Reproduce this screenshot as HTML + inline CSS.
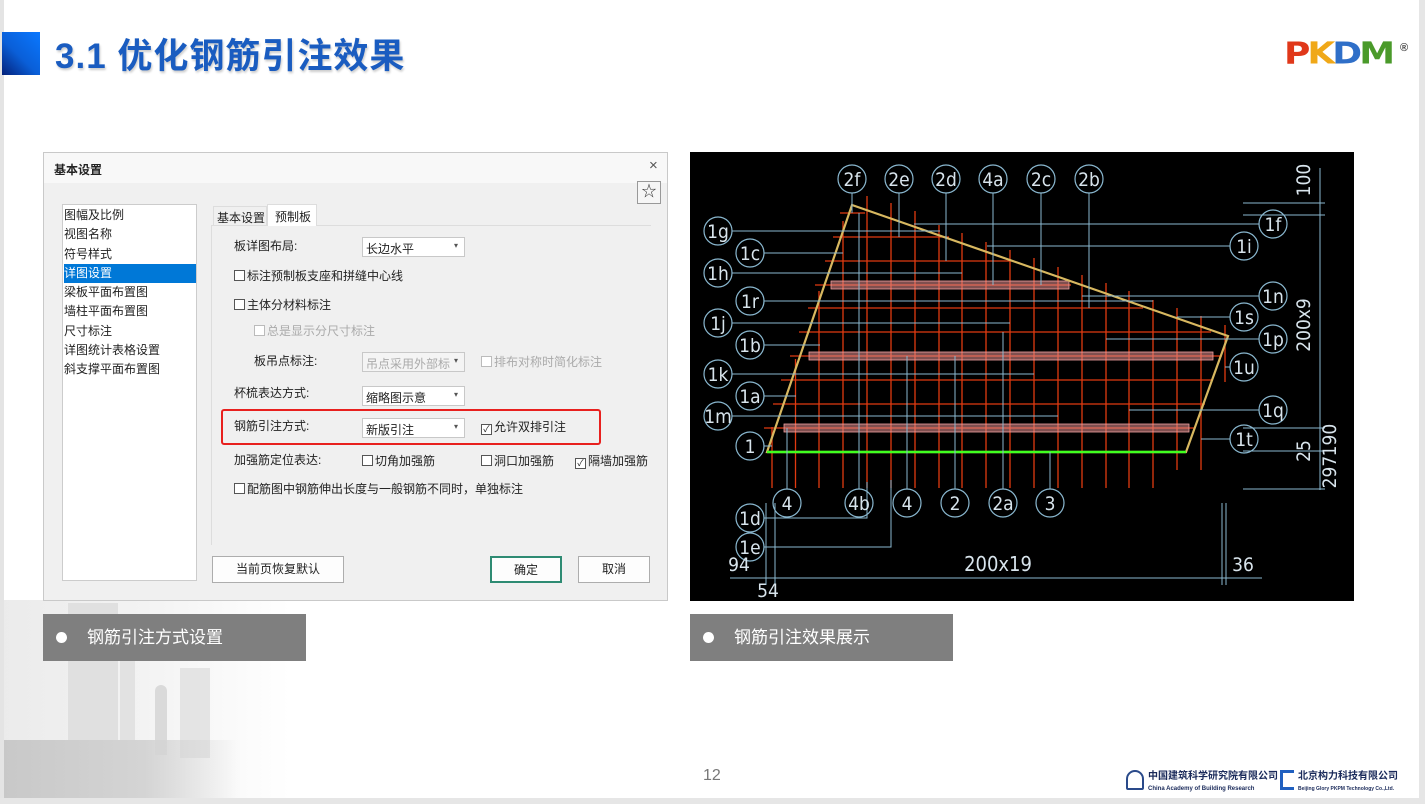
<!DOCTYPE html>
<html><head><meta charset="utf-8"><style>
*{margin:0;padding:0;box-sizing:border-box}
body{width:1425px;height:804px;background:#fff;position:relative;overflow:hidden;font-family:"Liberation Sans","Noto Sans CJK SC",sans-serif}
.abs{position:absolute;white-space:nowrap}
.dlg{left:43px;top:152px;width:625px;height:449px;background:#f0f0f0;border:1px solid #c9c9c9}
.dlg .t{font-size:12px;color:#222}
.cb{display:inline-block;width:11px;height:11px;border:1px solid #555;background:#fff;vertical-align:-1px;margin-right:2px;font-size:9px;line-height:9px;text-align:center}
.sel{background:#fff;border:1px solid #c8c8c8;height:20px;width:103px;font-size:12px;padding:2px 3px;color:#222}
.sel:after{content:"▾";position:absolute;right:6px;top:3px;font-size:8px;color:#555}
.btn{background:#fdfdfd;border:1px solid #adadad;font-size:12px;text-align:center;line-height:24px;color:#222;height:27px}
.cap{height:47px;background:#7f7f7f;color:#fff;font-size:17px;line-height:47px}
.cap i{position:absolute;left:13px;top:18px;width:11px;height:11px;border-radius:50%;background:#fff}
</style></head><body>
<!-- background building -->
<div class="abs" style="left:0;top:600px;width:290px;height:198px;background:linear-gradient(90deg,#e6e6e6 0%,#f0f0f0 50%,#fff 100%);opacity:.8"></div>
<div class="abs" style="left:68px;top:603px;width:50px;height:150px;background:#e0e0e0"></div>
<div class="abs" style="left:120px;top:660px;width:15px;height:95px;background:#e2e2e2"></div>
<div class="abs" style="left:155px;top:685px;width:12px;height:70px;background:#dadada;border-radius:6px 6px 0 0"></div>
<div class="abs" style="left:180px;top:668px;width:30px;height:90px;background:#e4e4e4"></div>
<div class="abs" style="left:0;top:740px;width:240px;height:58px;background:linear-gradient(90deg,#c8c8c8,#d4d4d4 60%,rgba(255,255,255,0))"></div>
<div class="abs" style="left:0;top:0;width:4px;height:804px;background:#e4e4e4"></div>
<div class="abs" style="left:1419px;top:0;width:6px;height:804px;background:#e6e6e6"></div>
<div class="abs" style="left:0;top:798px;width:1425px;height:6px;background:#e6e6e6"></div>

<!-- title -->
<div class="abs" style="left:2px;top:32px;width:38px;height:43px;background:linear-gradient(225deg,#0a78ff 0%,#0a5fd8 55%,#04217a 100%)"></div>
<div class="abs" style="left:55px;top:28px;font-size:35px;font-weight:bold;color:#1a5cc0;letter-spacing:1px;text-shadow:1px 2px 2px rgba(0,0,0,.2)">3.1 优化钢筋引注效果</div>
<!-- logo -->
<div class="abs" style="left:1284px;top:38px;font-size:36px;font-weight:bold;font-family:'DejaVu Sans',sans-serif;letter-spacing:-3px;line-height:38px;transform:scaleY(.85);transform-origin:0 0"><span style="color:#e0381a">P</span><span style="color:#f0a818">K</span><span style="color:#2f6fc8">D</span><span style="color:#4a9a2a">M</span></div>
<div class="abs" style="left:1400px;top:42px;font-size:11px;font-weight:bold;color:#444">®</div>

<!-- dialog -->
<div class="abs dlg">
 <div class="abs" style="left:0;top:0;width:623px;height:30px;background:#f8f8f8"></div>
 <div class="abs t" style="left:10px;top:8px;font-weight:bold">基本设置</div>
 <div class="abs" style="left:605px;top:4px;font-size:15px;color:#555">×</div>
 <div class="abs" style="left:593px;top:28px;width:24px;height:23px;border:1px solid #999;background:#f6f6f6;text-align:center;font-size:15px;line-height:20px;color:#333">☆</div>
 <div class="abs" style="left:18px;top:51px;width:135px;height:377px;background:#fff;border:1px solid #ccc"></div>
 <div class="abs t" style="left:20px;top:53px;line-height:19.3px;width:132px">
  <div>图幅及比例</div><div>视图名称</div><div>符号样式</div><div style="background:#0078d7;color:#fff">详图设置</div><div>梁板平面布置图</div><div>墙柱平面布置图</div><div>尺寸标注</div><div>详图统计表格设置</div><div>斜支撑平面布置图</div></div>
 <div class="abs" style="left:167px;top:72px;width:440px;height:1px;background:#ddd"></div>
 <div class="abs" style="left:167px;top:72px;width:1px;height:320px;background:#ddd"></div>
 <div class="abs t" style="left:169px;top:53px;width:54px;height:20px;border:1px solid #ddd;background:#f0f0f0;padding:2px 3px">基本设置</div>
 <div class="abs t" style="left:223px;top:51px;width:50px;height:22px;background:#fff;border:1px solid #ddd;border-bottom:none;padding:3px 7px">预制板</div>
 <div class="abs t" style="left:190px;top:84px">板详图布局:</div>
 <div class="abs sel" style="left:318px;top:84px">长边水平</div>
 <div class="abs t" style="left:190px;top:114px"><span class="cb"></span>标注预制板支座和拼缝中心线</div>
 <div class="abs t" style="left:190px;top:143px"><span class="cb"></span>主体分材料标注</div>
 <div class="abs t" style="left:210px;top:169px;color:#aaa"><span class="cb" style="border-color:#bbb"></span>总是显示分尺寸标注</div>
 <div class="abs t" style="left:210px;top:199px">板吊点标注:</div>
 <div class="abs sel" style="left:318px;top:199px;color:#aaa;background:#f4f4f4">吊点采用外部标</div>
 <div class="abs t" style="left:437px;top:200px;color:#aaa"><span class="cb" style="border-color:#bbb"></span>排布对称时简化标注</div>
 <div class="abs t" style="left:190px;top:231px">杯梳表达方式:</div>
 <div class="abs sel" style="left:318px;top:233px">缩略图示意</div>
 <div class="abs" style="left:177px;top:256px;width:380px;height:36px;border:2px solid #e8201e;border-radius:3px"></div>
 <div class="abs t" style="left:190px;top:264px">钢筋引注方式:</div>
 <div class="abs sel" style="left:318px;top:265px">新版引注</div>
 <div class="abs t" style="left:437px;top:265px"><span class="cb">✓</span>允许双排引注</div>
 <div class="abs t" style="left:190px;top:298px">加强筋定位表达:</div>
 <div class="abs t" style="left:318px;top:299px"><span class="cb"></span>切角加强筋</div>
 <div class="abs t" style="left:437px;top:299px"><span class="cb"></span>洞口加强筋</div>
 <div class="abs t" style="left:531px;top:299px"><span class="cb">✓</span>隔墙加强筋</div>
 <div class="abs t" style="left:190px;top:327px"><span class="cb"></span>配筋图中钢筋伸出长度与一般钢筋不同时，单独标注</div>
 <div class="abs btn" style="left:168px;top:403px;width:132px">当前页恢复默认</div>
 <div class="abs btn" style="left:446px;top:403px;width:72px;border:2px solid #2e8b73">确定</div>
 <div class="abs btn" style="left:534px;top:403px;width:72px">取消</div>
</div>

<!-- captions -->
<div class="abs cap" style="left:43px;top:614px;width:263px"><i></i><span style="position:absolute;left:44px">钢筋引注方式设置</span></div>
<div class="abs cap" style="left:690px;top:614px;width:263px"><i></i><span style="position:absolute;left:44px">钢筋引注效果展示</span></div>
<div class="abs" style="left:703px;top:767px;font-size:16px;color:#777">12</div>

<!-- footer logos -->
<div class="abs" style="left:1126px;top:770px;width:18px;height:20px;border:2px solid #2a4a8a;border-radius:9px 9px 2px 2px"></div>
<div class="abs" style="left:1148px;top:771px;font-size:10px;font-weight:bold;color:#1a2a5a;line-height:11px">中国建筑科学研究院有限公司<br><span style="font-size:6px">China Academy of Building Research</span></div>
<div class="abs" style="left:1280px;top:770px;width:14px;height:20px;border:3px solid #2060c0;border-right:none"></div>
<div class="abs" style="left:1298px;top:771px;font-size:10px;font-weight:bold;color:#1a2a5a;line-height:11px">北京构力科技有限公司<br><span style="font-size:5px">Beijing Glory PKPM Technology Co.,Ltd.</span></div>

<!-- CAD -->
<svg class="abs" style="left:0;top:0" width="1425" height="804" viewBox="0 0 1425 804">
<rect x="690" y="152" width="664" height="449" fill="#000"/>
<g stroke="#e03a10" stroke-width="1.3">
<line x1="772" y1="427" x2="772" y2="488"/><line x1="795.5" y1="359" x2="795.5" y2="488"/><line x1="819" y1="291" x2="819" y2="488"/><line x1="843" y1="221" x2="843" y2="488"/><line x1="867" y1="196" x2="867" y2="488"/><line x1="891" y1="203" x2="891" y2="488"/><line x1="915" y1="211" x2="915" y2="488"/><line x1="939" y1="225" x2="939" y2="488"/><line x1="962" y1="233" x2="962" y2="488"/><line x1="986" y1="242" x2="986" y2="488"/><line x1="1010" y1="250" x2="1010" y2="488"/><line x1="1034" y1="258" x2="1034" y2="488"/><line x1="1058" y1="267" x2="1058" y2="488"/><line x1="1082" y1="275" x2="1082" y2="488"/><line x1="1106" y1="283" x2="1106" y2="488"/><line x1="1129" y1="291" x2="1129" y2="488"/><line x1="1153" y1="300" x2="1153" y2="488"/><line x1="1177" y1="308" x2="1177" y2="470"/><line x1="1201" y1="316" x2="1201" y2="470"/><line x1="1225" y1="325" x2="1225" y2="382"/>
<line x1="840" y1="213" x2="865" y2="213"/><line x1="833" y1="237" x2="949" y2="237"/><line x1="825" y1="261" x2="1014" y2="261"/><line x1="815" y1="285" x2="1071" y2="285"/><line x1="808" y1="308" x2="1143" y2="308"/><line x1="799" y1="332" x2="1211" y2="332"/><line x1="790" y1="356" x2="1222" y2="356"/><line x1="781" y1="380" x2="1213" y2="380"/><line x1="773" y1="404" x2="1205" y2="404"/><line x1="764" y1="428" x2="1195" y2="428"/>
</g>
<g fill="#e89090" fill-opacity=".55" stroke="#f0a0a0" stroke-width=".8">
<rect x="831" y="281" width="238" height="8"/><rect x="809" y="352" width="404" height="8"/><rect x="784" y="424" width="405" height="8"/>
</g>
<polygon points="767,452 852,205 1228,336 1186,452" fill="none" stroke="#d8b860" stroke-width="2.2"/>
<line x1="767" y1="452" x2="1186" y2="452" stroke="#40ff20" stroke-width="2.5"/>
<g stroke="#8ab8d0" stroke-width="1" fill="none">
<line x1="732" y1="231" x2="940" y2="231"/><line x1="764" y1="253" x2="843" y2="253"/><line x1="732" y1="273" x2="962" y2="273"/><line x1="764" y1="301" x2="1153" y2="301"/><line x1="732" y1="323" x2="1010" y2="323"/><line x1="764" y1="345" x2="820" y2="345"/><line x1="732" y1="374" x2="1034" y2="374"/><line x1="764" y1="396" x2="796" y2="396"/><line x1="732" y1="416" x2="1058" y2="416"/><line x1="764" y1="446" x2="772" y2="446"/>
<line x1="914" y1="224" x2="1259" y2="224"/><line x1="987" y1="246" x2="1230" y2="246"/><line x1="1082" y1="296" x2="1259" y2="296"/><line x1="1177" y1="317" x2="1230" y2="317"/><line x1="1106" y1="339" x2="1259" y2="339"/><line x1="1225" y1="367" x2="1230" y2="367"/><line x1="1129" y1="410" x2="1259" y2="410"/><line x1="1201" y1="439" x2="1230" y2="439"/>
<line x1="852" y1="193" x2="852" y2="213"/><line x1="899" y1="193" x2="899" y2="237"/><line x1="946" y1="193" x2="946" y2="261"/><line x1="993" y1="193" x2="993" y2="285"/><line x1="1041" y1="193" x2="1041" y2="285"/><line x1="1089" y1="193" x2="1089" y2="308"/>
<line x1="787" y1="489" x2="787" y2="428"/><line x1="859" y1="489" x2="859" y2="213"/><line x1="907" y1="489" x2="907" y2="356"/><line x1="955" y1="489" x2="955" y2="356"/><line x1="1003" y1="489" x2="1003" y2="332"/><line x1="1050" y1="489" x2="1050" y2="452"/>
<polyline points="764,518 867,518 867,482"/><polyline points="764,547 891,547 891,480"/>
<line x1="730" y1="578" x2="1262" y2="578"/><line x1="766" y1="503" x2="766" y2="585"/><line x1="775" y1="503" x2="775" y2="585"/><line x1="1222" y1="503" x2="1222" y2="585"/><line x1="1226" y1="503" x2="1226" y2="585"/>
<line x1="1320" y1="168" x2="1320" y2="490"/><line x1="1243" y1="203" x2="1325" y2="203"/><line x1="1243" y1="215" x2="1325" y2="215"/><line x1="1243" y1="428" x2="1325" y2="428"/><line x1="1243" y1="451" x2="1325" y2="451"/><line x1="1243" y1="489" x2="1325" y2="489"/>
</g>
<g stroke="#8ab8d0" stroke-width="1.2" fill="none">
<circle cx="852" cy="179" r="14"/><circle cx="899" cy="179" r="14"/><circle cx="946" cy="179" r="14"/><circle cx="993" cy="179" r="14"/><circle cx="1041" cy="179" r="14"/><circle cx="1089" cy="179" r="14"/>
<circle cx="718" cy="231" r="14"/><circle cx="750" cy="253" r="14"/><circle cx="718" cy="273" r="14"/><circle cx="750" cy="301" r="14"/><circle cx="718" cy="323" r="14"/><circle cx="750" cy="345" r="14"/><circle cx="718" cy="374" r="14"/><circle cx="750" cy="396" r="14"/><circle cx="718" cy="416" r="14"/><circle cx="750" cy="446" r="14"/>
<circle cx="1273" cy="224" r="14"/><circle cx="1244" cy="246" r="14"/><circle cx="1273" cy="296" r="14"/><circle cx="1244" cy="317" r="14"/><circle cx="1273" cy="339" r="14"/><circle cx="1244" cy="367" r="14"/><circle cx="1273" cy="410" r="14"/><circle cx="1244" cy="439" r="14"/>
<circle cx="787" cy="503" r="14"/><circle cx="859" cy="503" r="14"/><circle cx="907" cy="503" r="14"/><circle cx="955" cy="503" r="14"/><circle cx="1003" cy="503" r="14"/><circle cx="1050" cy="503" r="14"/><circle cx="750" cy="518" r="14"/><circle cx="750" cy="547" r="14"/>
</g>
<g fill="#d8e4ec" font-family="'Liberation Sans Narrow','DejaVu Sans Condensed',sans-serif" font-size="19" text-anchor="middle">
<text x="852" y="186">2f</text><text x="899" y="186">2e</text><text x="946" y="186">2d</text><text x="993" y="186">4a</text><text x="1041" y="186">2c</text><text x="1089" y="186">2b</text>
<text x="718" y="238">1g</text><text x="750" y="260">1c</text><text x="718" y="280">1h</text><text x="750" y="308">1r</text><text x="718" y="330">1j</text><text x="750" y="352">1b</text><text x="718" y="381">1k</text><text x="750" y="403">1a</text><text x="718" y="423">1m</text><text x="750" y="453">1</text>
<text x="1273" y="231">1f</text><text x="1244" y="253">1i</text><text x="1273" y="303">1n</text><text x="1244" y="324">1s</text><text x="1273" y="346">1p</text><text x="1244" y="374">1u</text><text x="1273" y="417">1q</text><text x="1244" y="446">1t</text>
<text x="787" y="510">4</text><text x="859" y="510">4b</text><text x="907" y="510">4</text><text x="955" y="510">2</text><text x="1003" y="510">2a</text><text x="1050" y="510">3</text><text x="750" y="525">1d</text><text x="750" y="554">1e</text>
<text x="998" y="571" font-size="20">200x19</text><text x="739" y="571">94</text><text x="768" y="597">54</text><text x="1243" y="571">36</text>
<text transform="translate(1310,180) rotate(-90)">100</text>
<text transform="translate(1310,325) rotate(-90)">200x9</text>
<text transform="translate(1310,451) rotate(-90)">25</text>
<text transform="translate(1336,440) rotate(-90)">190</text>
<text transform="translate(1336,472) rotate(-90)">297</text>
</g>
</svg>
</body></html>
